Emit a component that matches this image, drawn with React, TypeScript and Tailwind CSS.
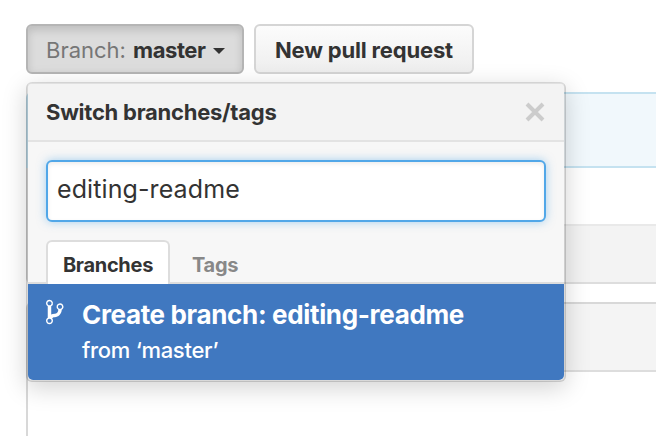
import React from 'react';

function BranchIcon() {
  return (
    <svg viewBox="0 0 10 16" className="mt-[14px] ml-[18px] h-7 w-[17.5px] shrink-0 fill-current" aria-hidden="true">
      <path
        fillRule="evenodd"
        d="M10 5c0-1.11-.89-2-2-2a1.993 1.993 0 0 0-1 3.72v.3c-.02.52-.23.98-.63 1.38-.4.4-.86.61-1.38.63-.83.02-1.48.16-2 .45V4.72a1.993 1.993 0 0 0-1-3.72C.88 1 0 1.89 0 3a2 2 0 0 0 1 1.72v6.56c-.59.35-1 .99-1 1.72 0 1.11.89 2 2 2 1.11 0 2-.89 2-2 0-.53-.2-1-.53-1.36.09-.06.48-.41.59-.47.25-.11.56-.17.94-.17 1.05-.05 1.95-.45 2.75-1.25S8.95 7.77 9 6.73h-.02C9.59 6.37 10 5.73 10 5zM2 1.8c.66 0 1.2.55 1.2 1.2 0 .65-.55 1.2-1.2 1.2C1.35 4.2.8 3.65.8 3c0-.65.55-1.2 1.2-1.2zm0 12.41c-.66 0-1.2-.55-1.2-1.2 0-.65.55-1.2 1.2-1.2.65 0 1.2.55 1.2 1.2 0 .65-.55 1.2-1.2 1.2zm6-8c-.66 0-1.2-.55-1.2-1.2 0-.65.55-1.2 1.2-1.2.65 0 1.2.55 1.2 1.2 0 .65-.55 1.2-1.2 1.2z"
      />
    </svg>
  );
}

function BranchMenu() {
  return (
    <div className="absolute top-[56px] -left-[2px] z-10 w-[540px] rounded-[6px] border-2 border-black/15 border-t-black/12 bg-[#f7f7f7] bg-clip-padding shadow-[0_6px_24px_rgba(0,0,0,0.175)]">
      <div className="flex h-[58px] items-center justify-between rounded-t-[4px] border-b-2 border-[#e3e3e3] bg-[#f3f3f3] pr-[19px] pl-[18px]">
        <span className="text-[22px] leading-none font-bold tracking-[-0.25px] whitespace-nowrap">Switch branches/tags</span>
        <svg viewBox="0 0 20 20" className="h-5 w-5" aria-label="Close">
          <path d="M2 2L18 18M18 2L2 18" stroke="#cccccc" strokeWidth="4" fill="none" />
        </svg>
      </div>
      <div className="px-[18px] pt-[18px]">
        <input
          aria-label="Find or create a branch"
          defaultValue="editing-readme"
          className="block h-[62px] w-full rounded-[6px] border-2 border-[#51a7e8] bg-white px-[9px] pb-1 text-[25px] font-normal tracking-[0.1px] text-[#333] shadow-[inset_0_2px_4px_rgba(0,0,0,0.075),0_0_10px_rgba(81,167,232,0.5)] outline-none"
        />
      </div>
      <div className="mt-[18px] flex h-[44px] border-b-2 border-[#dddddd] pl-[18px] text-[20px] font-bold">
        <div className="flex h-[44px] w-[124px] shrink-0 items-center justify-center rounded-t-[6px] border-2 border-b-0 border-[#dddddd] bg-white pt-1">
          <span className="tracking-[-0.3px]">Branches</span>
        </div>
        <div className="flex h-[44px] items-center pt-[5px] pl-[22px] text-[#888]">
          <span className="tracking-[-0.3px]">Tags</span>
        </div>
      </div>
      <div className="flex h-[96px] rounded-b-[5px] bg-[#4078c0] text-white">
        <BranchIcon />
        <div className="ml-[18.5px] whitespace-nowrap">
          <div className="pt-[15px] text-[26px] leading-[32px] font-bold tracking-[-0.34px]"><span>Create branch: editing-readme</span></div>
          <div className="pt-[5px] text-[22px] leading-[28px] font-medium tracking-[-0.3px]"><span>from ‘master’</span></div>
        </div>
      </div>
    </div>
  );
}

export default function App() {
  return (
    <main className="h-[436px] w-[656px] overflow-hidden bg-white pt-6 pl-[26px] font-['Inter','Liberation_Sans',sans-serif] text-[#333]">
      <div className="flex gap-[10px] text-[22px] leading-none font-bold">
        <div className="relative h-[50px] w-[218px] rounded-[6px] border-2 border-[#b5b5b5] bg-[#dcdcdc] shadow-[inset_0_4px_8px_rgba(0,0,0,0.14)]">
          <div className="flex h-full items-center pt-[2px] pl-[18px] whitespace-nowrap">
            <span className="mr-[7px] font-normal tracking-[0px] text-[#767676]">Branch:</span>
            <span className="tracking-[-0.4px]">master</span>
            <span className="mt-[1px] ml-[7px] border-x-[6px] border-t-[6px] border-x-transparent border-t-[#333]" />
          </div>
          <BranchMenu />
        </div>
        <button className="flex h-[50px] w-[220px] items-center justify-center rounded-[6px] border-2 border-[#d5d5d5] bg-linear-to-b from-[#fcfcfc] to-[#eeeeee] pt-[2px] whitespace-nowrap">
          <span className="tracking-[-0.17px]">New pull request</span>
        </button>
      </div>
      <div className="mt-[18px] h-[76px] rounded-tl-[6px] border-2 border-r-0 border-[#c5e2f0] bg-[#f1f8fc]" />
      <div className="h-[116px] rounded-bl-[6px] border-b-2 border-l-2 border-[#dddddd] pt-[56px]">
        <div className="h-[58px] border-t-2 border-[#e9e9e9] bg-[#f3f3f3]" />
      </div>
      <div className="mt-[18px] h-[140px] rounded-tl-[6px] border-t-2 border-l-2 border-[#d8d8d8]">
        <div className="h-[68px] border-b-2 border-[#dddddd] bg-[#f4f4f4]" />
      </div>
    </main>
  );
}
